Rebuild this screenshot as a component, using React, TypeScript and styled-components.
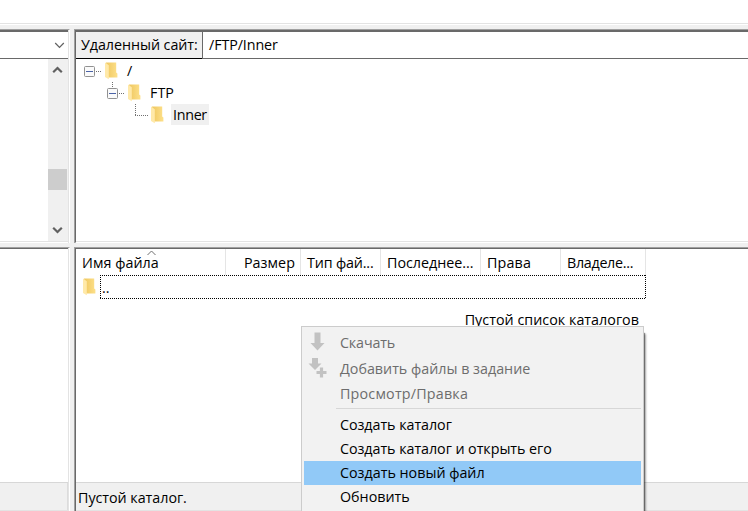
import React from 'react';
import styled, { createGlobalStyle } from 'styled-components';

const GlobalStyle = createGlobalStyle`
  * { box-sizing: border-box; }
  body { margin: 0; background: #fff; overflow: hidden; }
`;

const Window = styled.div`
  width: 748px;
  height: 511px;
  overflow: hidden;
  display: flex;
  flex-direction: column;
  position: relative;
  background: #f0f0f0;
  color: #000;
  font: 14.3px/20px "Open Sans", sans-serif;
`;

const LogPanel = styled.div`
  flex: none;
  height: 25px;
  background: #fff;
  border-bottom: 1px solid #fff;
  box-shadow: inset 0 -1px #e3e3e3;
`;

const Splits = styled.div`
  flex: none;
  height: 482px;
  margin-top: 4px;
  display: grid;
  grid-template-columns: 70px 674px;
  grid-template-rows: 214px 264px;
  gap: 4px;
`;

const Pane = styled.section<{ $side: 'left' | 'right' }>`
  display: flex;
  flex-direction: column;
  min-width: 0;
  overflow: hidden;
  background: #fff;
  border-top: 1px solid #a0a0a0;
  ${p =>
    p.$side === 'left'
      ? 'border-right: 1px solid #fff; box-shadow: inset -1px 0 #e3e3e3; padding-right: 1px;'
      : 'border-left: 1px solid #a0a0a0;'}
`;

const PaneInner = styled.div<{ $left?: boolean; $top?: number; $bottom?: boolean }>`
  flex: 1;
  min-height: 0;
  display: flex;
  flex-direction: column;
  border-top: ${p => p.$top ?? 1}px solid #696969;
  ${p => p.$left && 'border-left: 1px solid #696969;'}
  ${p => p.$bottom && 'border-bottom: 1px solid #fff; box-shadow: inset 0 -1px #e3e3e3; padding-bottom: 1px;'}
`;

const Text = styled.span<{ $spacing?: number }>`
  white-space: pre;
  letter-spacing: ${p => p.$spacing ?? 0}px;
`;

const Combo = styled.div`
  flex: none;
  height: 27px;
  display: flex;
  align-items: center;
  justify-content: flex-end;
  padding-right: 3px;
  border-bottom: 1px solid #696969;
`;

const ScrollArea = styled.div`
  flex: 1;
  display: flex;
  justify-content: flex-end;
`;

const ScrollBar = styled.div`
  width: 20px;
  background: #f0f0f0;
  display: flex;
  flex-direction: column;
  padding-top: 7px;
`;

const Thumb = styled.div`
  width: 19px;
  height: 21px;
  margin: 95px 0 36px;
  background: #cdcdcd;
`;

const AddressBar = styled.div`
  flex: none;
  height: 27px;
  display: flex;
`;

const AddressLabel = styled.label`
  width: 126px;
  padding: 3px 0 0 5px;
  background: #f0f0f0;
  border-bottom: 1px solid #000;
`;

const AddressInput = styled.div`
  flex: 1;
  padding: 3px 0 0 6px;
  border-left: 1px solid #696969;
  border-bottom: 1px solid #696969;
`;

const Tree = styled.div`
  padding-top: 1px;
`;

const TreeRow = styled.div`
  height: 22px;
  display: flex;
  align-items: flex-start;
`;

const FolderSlot = styled.div`
  padding-top: 2px;
  line-height: 0;
`;

const TreeLabel = styled.div<{ $selected?: boolean }>`
  height: 21px;
  margin-left: 7px;
  padding: 0 2px;
  line-height: 21px;
  background: ${p => (p.$selected ? '#f0f0f0' : 'transparent')};
`;

const TableHeader = styled.div`
  flex: none;
  height: 26px;
  display: flex;
`;

const HeaderCell = styled.div<{ $w: number; $right?: boolean }>`
  position: relative;
  flex: none;
  width: ${p => p.$w}px;
  padding: 4px ${p => (p.$right ? 5 : 0)}px 0 6px;
  text-align: ${p => (p.$right ? 'right' : 'left')};
  border-right: 1px solid #e5e5e5;
`;

const SortMark = styled.svg`
  position: absolute;
  left: 71px;
  top: 1px;
`;

const FileRow = styled.div`
  flex: none;
  height: 24px;
  display: flex;
  align-items: center;
  padding-left: 7px;
`;

const FocusCell = styled.div`
  display: grid;
  width: 546px;
  height: 24px;
  margin-left: 4px;
`;

const FocusRing = styled.svg`
  grid-area: 1 / 1;
`;

const FocusName = styled(Text)`
  grid-area: 1 / 1;
  padding: 4px 0 0 2px;
  line-height: 18px;
`;

const EmptyNote = styled.div`
  width: 563px;
  margin-top: 11px;
  text-align: right;
`;

const StatusBar = styled.footer<{ $grip?: boolean }>`
  flex: none;
  height: 29px;
  margin-top: auto;
  padding: 5px 0 0 2px;
  background: #f0f0f0;
  border-top: 1px solid #d7d7d7;
  ${p => p.$grip && 'box-shadow: inset -1px 0 #dcdcdc;'}
`;

const BottomEdge = styled.div`
  flex: none;
  height: 1px;
  margin-top: -1px;
  background: #e3e3e3;
`;

const Menu = styled.nav`
  position: absolute;
  left: 301px;
  top: 326px;
  width: 343px;
  height: 200px;
  padding: 2px;
  background: #f2f2f2;
  border: 1px solid #ccc;
  box-shadow: 2px 6px 1px -1px rgba(0, 0, 0, 0.4), 3px 7px 2px -1px rgba(0, 0, 0, 0.3);
`;

const MenuItem = styled.div<{ $h?: number; $disabled?: boolean; $active?: boolean }>`
  height: ${p => p.$h ?? 24}px;
  display: flex;
  align-items: center;
  color: ${p => (p.$disabled ? '#6d6d6d' : '#000')};
  background: ${p => (p.$active ? '#91c9f7' : 'transparent')};
`;

const MenuIcon = styled.div`
  width: 36px;
  height: 24px;
  line-height: 0;
`;

const Separator = styled.hr`
  height: 1px;
  margin: 2px 0 4px 32px;
  border: 0;
  background: #d7d7d7;
`;

const Folder = () => (
  <svg width="13" height="18" viewBox="0 0 13 18">
    <defs>
      <linearGradient id="folderBack" x1="0" x2="1">
        <stop offset="0" stopColor="#efc75f" />
        <stop offset="1" stopColor="#fde08a" />
      </linearGradient>
    </defs>
    <path d="M1 .5H11.2V10.5L12.4 11.5V15.5H3Z" fill="url(#folderBack)" />
    <path d="M0 .5L3.8 3.3V17.2L0 15Z" fill="#ffe9a9" />
  </svg>
);

const DOTS = { stroke: '#707070', strokeDasharray: '1 1' };

const Expander = ({ x }: { x: number }) => (
  <g>
    <rect x={x + 0.5} y="6.5" width="10" height="10" rx="1" fill="#fafafa" stroke="#919191" />
    <path d={`M${x + 2} 11.5h7`} stroke="#4b63a7" />
    <path d={`M${x + 12} 11.5h5`} {...DOTS} />
  </g>
);

const Chevron = ({ up }: { up?: boolean }) => (
  <svg width="19" height="8" viewBox="0 0 19 8">
    <path d={up ? 'M5.2 6.3L9.5 2L13.8 6.3' : 'M5.2 1.7L9.5 6L13.8 1.7'} fill="none" stroke="#606060" strokeWidth="2.2" />
  </svg>
);

const columns = [
  { name: 'Имя файла', w: 150, spacing: 0.05, sorted: true },
  { name: 'Размер', w: 75, spacing: 0.05, right: true },
  { name: 'Тип фай...', w: 80, spacing: -0.15 },
  { name: 'Последнее...', w: 100, spacing: -0.02 },
  { name: 'Права', w: 80, spacing: 0.15 },
  { name: 'Владеле...', w: 85, spacing: -0.3 },
];

export default function App() {
  return (
    <>
      <GlobalStyle />
      <Window>
        <LogPanel />
        <Splits>
          <Pane $side="left">
            <PaneInner $top={2} $bottom>
              <Combo>
                <svg width="11" height="8" viewBox="0 0 11 8">
                  <path d="M1.2 2L5.5 6.3L9.8 2" fill="none" stroke="#606060" strokeWidth="1.2" />
                </svg>
              </Combo>
              <ScrollArea>
                <ScrollBar>
                  <Chevron up />
                  <Thumb />
                  <Chevron />
                </ScrollBar>
              </ScrollArea>
            </PaneInner>
          </Pane>
          <Pane $side="right">
            <PaneInner $left $top={2} $bottom>
              <AddressBar>
                <AddressLabel>
                  <Text $spacing={-0.05}>Удаленный сайт:</Text>
                </AddressLabel>
                <AddressInput>
                  <Text $spacing={-0.1}>/FTP/Inner</Text>
                </AddressInput>
              </AddressBar>
              <Tree>
                <TreeRow>
                  <svg width="29" height="22">
                    <Expander x={8} />
                  </svg>
                  <FolderSlot><Folder /></FolderSlot>
                  <TreeLabel><Text>/</Text></TreeLabel>
                </TreeRow>
                <TreeRow>
                  <svg width="52" height="22">
                    <path d="M36.5 0v6" {...DOTS} />
                    <Expander x={31} />
                  </svg>
                  <FolderSlot><Folder /></FolderSlot>
                  <TreeLabel><Text>FTP</Text></TreeLabel>
                </TreeRow>
                <TreeRow>
                  <svg width="75" height="22">
                    <path d="M59.5 0v11M59 11.5h13" {...DOTS} />
                  </svg>
                  <FolderSlot><Folder /></FolderSlot>
                  <TreeLabel $selected><Text $spacing={-0.3}>Inner</Text></TreeLabel>
                </TreeRow>
              </Tree>
            </PaneInner>
          </Pane>
          <Pane $side="left">
            <PaneInner>
              <StatusBar $grip />
              <BottomEdge />
            </PaneInner>
          </Pane>
          <Pane $side="right">
            <PaneInner $left>
              <TableHeader>
                {columns.map(c => (
                  <HeaderCell key={c.name} $w={c.w} $right={c.right}>
                    <Text $spacing={c.spacing}>{c.name}</Text>
                    {c.sorted && (
                      <SortMark width="9" height="6">
                        <path d="M.5 5L4.5 1L8.5 5" fill="none" stroke="#707070" />
                      </SortMark>
                    )}
                  </HeaderCell>
                ))}
              </TableHeader>
              <FileRow>
                <Folder />
                <FocusCell>
                  <FocusRing width="546" height="24">
                    <path
                      d="M0 .5H546M0 23.5H546M.5 0V24M545.5 0V24"
                      fill="none"
                      stroke="#000"
                      strokeDasharray="1 1"
                      shapeRendering="crispEdges"
                    />
                  </FocusRing>
                  <FocusName>..</FocusName>
                </FocusCell>
              </FileRow>
              <EmptyNote>
                <Text $spacing={0.03}>Пустой список каталогов</Text>
              </EmptyNote>
              <StatusBar>
                <Text $spacing={-0.03}>Пустой каталог.</Text>
              </StatusBar>
              <BottomEdge />
            </PaneInner>
          </Pane>
        </Splits>
        <Menu>
          <MenuItem $h={27} $disabled>
            <MenuIcon>
              <svg width="24" height="24" viewBox="0 0 24 24">
                <path d="M10.5 1.5H16.5V12H20.5L13.5 19.5L6.5 12H10.5Z" fill="#c2c2c2" />
              </svg>
            </MenuIcon>
            <Text $spacing={-0.15}>Скачать</Text>
          </MenuItem>
          <MenuItem $h={26} $disabled>
            <MenuIcon>
              <svg width="24" height="24" viewBox="0 0 24 24">
                <path d="M8 1H14V6.5H17.5L11 13L4.5 6.5H8Z" fill="#c2c2c2" />
                <path d="M17.5 10V20M12.5 15.5H23" stroke="#f2f2f2" strokeWidth="4.4" />
                <path d="M17.5 10.5V20.5M12.5 15.5H22.5" stroke="#c2c2c2" strokeWidth="3.2" />
              </svg>
            </MenuIcon>
            <Text>Добавить файлы в задание</Text>
          </MenuItem>
          <MenuItem $disabled>
            <MenuIcon />
            <Text $spacing={0.2}>Просмотр/Правка</Text>
          </MenuItem>
          <Separator />
          <MenuItem>
            <MenuIcon />
            <Text $spacing={-0.05}>Создать каталог</Text>
          </MenuItem>
          <MenuItem>
            <MenuIcon />
            <Text $spacing={-0.05}>Создать каталог и открыть его</Text>
          </MenuItem>
          <MenuItem $active>
            <MenuIcon />
            <Text>Создать новый файл</Text>
          </MenuItem>
          <MenuItem>
            <MenuIcon />
            <Text>Обновить</Text>
          </MenuItem>
        </Menu>
      </Window>
    </>
  );
}
